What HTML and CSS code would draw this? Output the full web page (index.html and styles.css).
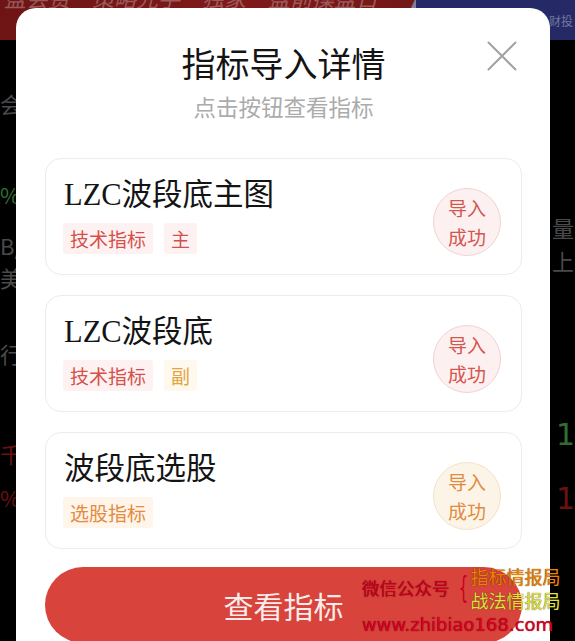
FILE: index.html
```html
<!DOCTYPE html>
<html lang="zh-CN">
<head>
<meta charset="utf-8">
<title>指标导入详情</title>
<link rel="stylesheet" href="styles.css">
</head>
<body>
<div class="screen">
  <div class="backdrop">
    <div class="banner">
      <div class="banner-red"><span class="banner-text">盘会费　策略先手　独家　盘前操盘日</span></div>
      <div class="banner-slash"></div>
      <div class="banner-blue"><span class="banner-text small">财投</span></div>
    </div>
    <span class="bgt gray" style="left:0;top:90px">会议</span>
    <span class="bgt green" style="left:0;top:181px">%</span>
    <span class="bgt gray" style="left:0;top:232px">B/</span>
    <span class="bgt gray" style="left:0;top:264px">美</span>
    <span class="bgt gray" style="left:0;top:340px">行业</span>
    <span class="bgt red" style="left:0;top:440px">千</span>
    <span class="bgt red" style="left:0;top:484px">%</span>
    <span class="bgt gray" style="left:552px;top:214px">量，</span>
    <span class="bgt gray" style="left:552px;top:247px">上</span>
    <span class="bgt green big" style="left:556px;top:418px">1</span>
    <span class="bgt red big" style="left:556px;top:482px">1</span>
  </div>

  <div class="modal">
    <svg class="close" width="30" height="30" viewBox="0 0 30 30" aria-hidden="true">
      <path d="M1.5 1.5 L28.5 28.5 M28.5 1.5 L1.5 28.5" stroke="#a2a2a2" stroke-width="2" fill="none" stroke-linecap="round"/>
    </svg>
    <h1 class="title">指标导入详情</h1>
    <p class="subtitle">点击按钮查看指标</p>

    <div class="cards">
      <div class="card">
        <div class="card-main">
          <div class="card-title">LZC波段底主图</div>
          <div class="tags">
            <span class="tag tag-red">技术指标</span>
            <span class="tag tag-red">主</span>
          </div>
        </div>
        <div class="badge badge-red">导入<br>成功</div>
      </div>

      <div class="card">
        <div class="card-main">
          <div class="card-title">LZC波段底</div>
          <div class="tags">
            <span class="tag tag-red">技术指标</span>
            <span class="tag tag-yellow">副</span>
          </div>
        </div>
        <div class="badge badge-red">导入<br>成功</div>
      </div>

      <div class="card">
        <div class="card-main">
          <div class="card-title">波段底选股</div>
          <div class="tags">
            <span class="tag tag-orange">选股指标</span>
          </div>
        </div>
        <div class="badge badge-orange">导入<br>成功</div>
      </div>
    </div>

    <button class="view-btn">查看指标</button>
  </div>

  <div class="watermark">
    <div class="wm-row">
      <span class="wm-label">微信公众号</span>
      <span class="wm-brace">{</span>
      <span class="wm-names">
        <span class="wm-orange">指标情报局</span>
        <span class="wm-yellow">战法情报局</span>
      </span>
    </div>
    <div class="wm-url">www.zhibiao168.com</div>
  </div>
</div>
</body>
</html>
```

FILE: styles.css
```css
* { box-sizing: border-box; }

html, body {
  margin: 0;
  padding: 0;
  background: #000;
}

body {
  font-family: "Noto Sans CJK SC", "Noto Sans", sans-serif;
}

.screen {
  position: relative;
  width: 575px;
  height: 641px;
  overflow: hidden;
  background: #000;
}

/* ---------- underlying page (covered by the modal) ---------- */
.backdrop {
  position: absolute;
  inset: 0;
}

.banner {
  display: flex;
  height: 40px;
}

.banner-red {
  width: 400px;
  background: linear-gradient(90deg, #6e1414, #7f1a1a 60%, #761717);
  overflow: hidden;
}

.banner-slash {
  width: 16px;
  background: linear-gradient(115deg, #731717 40%, #7f8199 45%, #7f8199 55%, #262a66 60%);
}

.banner-blue {
  flex: 1;
  background: #252a66;
  overflow: hidden;
  display: flex;
  justify-content: flex-end;
  align-items: flex-end;
}

.banner-text {
  display: block;
  margin-top: -16px;
  padding-left: 4px;
  font-size: 22px;
  line-height: 26px;
  font-style: italic;
  color: #b99090;
  opacity: 0.55;
  white-space: nowrap;
}

.banner-text.small {
  margin: 0 2px 12px 0;
  font-size: 12px;
  line-height: 14px;
  font-style: normal;
  color: #7078a0;
  opacity: 1;
}

.bgt {
  position: absolute;
  font-size: 22px;
  line-height: 26px;
  white-space: nowrap;
}
.bgt.gray { color: #4a4a4a; }
.bgt.green { color: #2f6e2f; }
.bgt.red { color: #6a1111; }
.bgt.big { font-size: 30px; line-height: 34px; font-family: "DejaVu Sans", sans-serif; }

/* ---------- modal ---------- */
.modal {
  position: relative;
  margin: 8px 0 0 16px;
  width: 534px;
  height: 680px;
  background: #fff;
  border-radius: 20px 20px 0 0;
  padding: 33px 28px 0 29px;
  display: flex;
  flex-direction: column;
}

.close {
  position: absolute;
  top: 33px;
  right: 33px;
}

.title {
  margin: 0;
  text-align: center;
  font-size: 34px;
  line-height: 44px;
  font-weight: 400;
  color: #141414;
}

.subtitle {
  margin: 6px 0 0;
  text-align: center;
  font-size: 22.5px;
  line-height: 30px;
  color: #ababab;
}

.cards {
  margin-top: 37px;
  display: flex;
  flex-direction: column;
  gap: 20px;
}

.card {
  height: 117px;
  border: 1px solid #ececec;
  border-radius: 16px;
  padding: 16px 20px 0 17px;
  display: flex;
  justify-content: space-between;
  align-items: flex-start;
}

.card-title {
  font-family: "Liberation Serif", "Noto Sans CJK SC", serif;
  font-size: 30.5px;
  line-height: 40px;
  color: #141414;
  padding-left: 1px;
}

.tags {
  margin-top: 8px;
  display: flex;
  gap: 11px;
}

.tag {
  display: inline-block;
  height: 31px;
  line-height: 31px;
  padding: 0 7px;
  font-size: 19px;
  border-radius: 3px;
}

.tag-red { color: #d5504a; background: #fdf2f1; }
.tag-yellow { color: #e3a441; background: #fff8ec; }
.tag-orange { color: #e68a3d; background: #fff5ea; }

.badge {
  margin-top: 13px;
  width: 68px;
  height: 68px;
  border-radius: 50%;
  display: flex;
  align-items: center;
  justify-content: center;
  text-align: center;
  font-size: 19px;
  line-height: 29px;
}

.badge-red { background: #fcf0f0; border: 1px solid #f0d3d3; color: #d5564f; }
.badge-orange { background: #fdf4e8; border: 1px solid #f4e1c8; color: #e28b3e; }

.view-btn {
  margin-top: 18px;
  height: 76px;
  width: 100%;
  border: none;
  border-radius: 38px;
  background: #d8433c;
  color: #fbeceb;
  font-family: "Noto Sans CJK SC", sans-serif;
  font-size: 30px;
  line-height: 40px;
  padding: 0;
}

/* ---------- watermark overlay ---------- */
.watermark {
  position: absolute;
  left: 362px;
  top: 564px;
  font-family: "Noto Sans CJK SC", sans-serif;
}

.wm-row {
  display: flex;
  align-items: center;
}

.wm-label {
  font-size: 17.5px;
  line-height: 22px;
  color: #c8001c;
  text-shadow: 0 0 1px #5a0008;
}

.wm-brace {
  margin-left: 4px;
  font-family: "DejaVu Sans", sans-serif;
  font-size: 30px;
  line-height: 40px;
  transform: scaleX(0.5);
  color: #c8001c;
}

.wm-names {
  display: flex;
  flex-direction: column;
  margin-left: -2px;
}

.wm-orange, .wm-yellow {
  font-size: 18px;
  line-height: 24px;
  text-shadow: 0 0 1px #3a2000;
}
.wm-orange { color: #ee8200; }
.wm-yellow { color: #dfe33c; }

.wm-url {
  margin-top: 2px;
  font-family: "DejaVu Sans", sans-serif;
  font-size: 18px;
  line-height: 22px;
  color: #dd0022;
  text-shadow: 0 0 1px #4a0008;
  white-space: nowrap;
}
```
